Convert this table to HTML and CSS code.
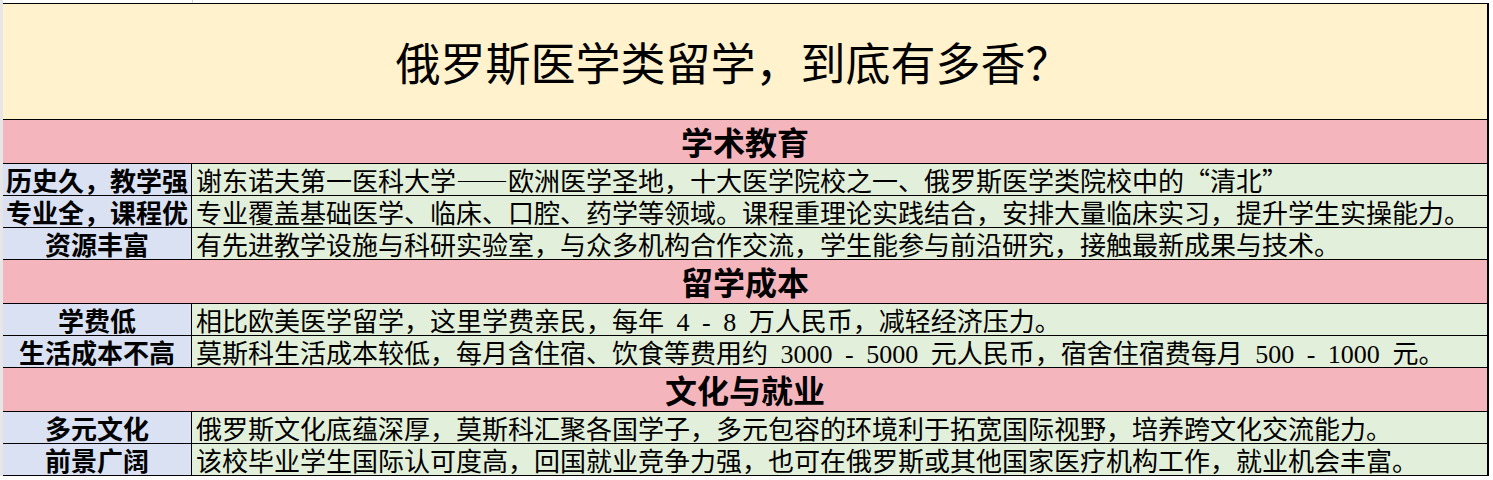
FILE: index.html
```html
<!DOCTYPE html>
<html lang="zh-CN">
<head>
<meta charset="utf-8">
<title>俄罗斯医学类留学，到底有多香？</title>
<link rel="stylesheet" href="styles.css">
</head>
<body>
<div class="page">
  <div class="topstrip"><div class="topcol"></div></div>
  <div class="sheet">
    <div class="title">俄罗斯医学类留学，到底有多香？</div>

    <div class="section">学术教育</div>
    <div class="row"><div class="label">历史久，教学强</div><div class="content">谢东诺夫第一医科大学——欧洲医学圣地，十大医学院校之一、俄罗斯医学类院校中的“清北”</div></div>
    <div class="row"><div class="label">专业全，课程优</div><div class="content">专业覆盖基础医学、临床、口腔、药学等领域。课程重理论实践结合，安排大量临床实习，提升学生实操能力。</div></div>
    <div class="row"><div class="label">资源丰富</div><div class="content">有先进教学设施与科研实验室，与众多机构合作交流，学生能参与前沿研究，接触最新成果与技术。</div></div>

    <div class="section">留学成本</div>
    <div class="row"><div class="label">学费低</div><div class="content">相比欧美医学留学，这里学费亲民，每年<span class="num"> 4 - 8 </span>万人民币，减轻经济压力。</div></div>
    <div class="row"><div class="label">生活成本不高</div><div class="content">莫斯科生活成本较低，每月含住宿、饮食等费用约<span class="num"> 3000 - 5000 </span>元人民币，宿舍住宿费每月<span class="num"> 500 - 1000 </span>元。</div></div>

    <div class="section">文化与就业</div>
    <div class="row"><div class="label">多元文化</div><div class="content">俄罗斯文化底蕴深厚，莫斯科汇聚各国学子，多元包容的环境利于拓宽国际视野，培养跨文化交流能力。</div></div>
    <div class="row"><div class="label">前景广阔</div><div class="content">该校毕业学生国际认可度高，回国就业竞争力强，也可在俄罗斯或其他国家医疗机构工作，就业机会丰富。</div></div>
  </div>
</div>
</body>
</html>
```

FILE: styles.css
```css
html, body {
  margin: 0;
  padding: 0;
  background: #ffffff;
}

body {
  font-family: "Noto Sans CJK SC", sans-serif;
  color: #000000;
}

.page {
  border-left: 3px solid #e6e6e6;
  width: 1490px;
}

.topstrip {
  height: 3px;
  display: flex;
}

.topcol {
  width: 189px;
  border-right: 1px solid #d4d4d4;
}

.sheet {
  width: 1484px;
  border-top: 1px solid #000000;
  border-right: 2px solid #000000;
}

.title {
  height: 115px;
  line-height: 115px;
  background: #fff2cc;
  border-bottom: 1px solid #000000;
  text-align: center;
  font-size: 45px;
  padding-right: 24px;
  white-space: nowrap;
}

.section {
  height: 43px;
  line-height: 43px;
  background: #f4b6bc;
  border-bottom: 1px solid #000000;
  text-align: center;
  font-size: 32px;
  font-weight: 700;
}

.row {
  display: grid;
  grid-template-columns: 189px 1fr;
  grid-template-rows: 31px;
  height: 31px;
  border-bottom: 1px solid #000000;
}

.label {
  background: #d9e1f2;
  border-right: 1px solid #000000;
  text-align: center;
  font-size: 26px;
  font-weight: 700;
  line-height: 31px;
  white-space: nowrap;
}

.content {
  background: #e2efda;
  font-size: 26px;
  line-height: 31px;
  padding-left: 4px;
  white-space: nowrap;
}

.num {
  font-family: "Liberation Serif", serif;
  line-height: 1;
  word-spacing: 6px;
}
```
